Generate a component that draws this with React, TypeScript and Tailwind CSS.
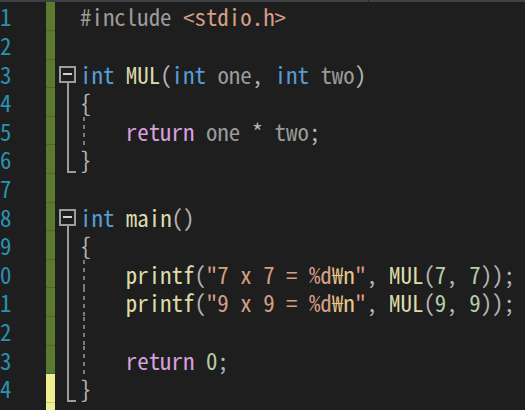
import React from "react";

type Seg = [string, string];

const C = {
  pre: "text-[#9b9b9b]",
  inc: "text-[#d69d85]",
  kw: "text-[#569cd6]",
  fn: "text-[#dcdcaa]",
  par: "text-[#9a9a9a]",
  pun: "text-[#b4b4b4]",
  ret: "text-[#d8a0df]",
  str: "text-[#d69d85]",
  esc: "text-[#e9c88c]",
  num: "text-[#b5cea8]",
};

const lines: Seg[][] = [
  [["#include ", C.pre], ["<stdio.h>", C.inc]],
  [],
  [["int", C.kw], [" ", C.pun], ["MUL", C.fn], ["(", C.pun], ["int", C.kw], [" ", C.pun], ["one", C.par], [", ", C.pun], ["int", C.kw], [" ", C.pun], ["two", C.par], [")", C.pun]],
  [["{", C.pun]],
  [["    ", C.pun], ["return", C.ret], [" ", C.pun], ["one", C.par], [" * ", C.pun], ["two", C.par], [";", C.pun]],
  [["}", C.pun]],
  [],
  [["int", C.kw], [" ", C.pun], ["main", C.fn], ["()", C.pun]],
  [["{", C.pun]],
  [["    ", C.pun], ["printf", C.fn], ["(", C.pun], ["\"7 x 7 = %d", C.str], ["₩n", C.esc], ["\"", C.str], [", ", C.pun], ["MUL", C.fn], ["(", C.pun], ["7", C.num], [", ", C.pun], ["7", C.num], ["));", C.pun]],
  [["    ", C.pun], ["printf", C.fn], ["(", C.pun], ["\"9 x 9 = %d", C.str], ["₩n", C.esc], ["\"", C.str], [", ", C.pun], ["MUL", C.fn], ["(", C.pun], ["9", C.num], [", ", C.pun], ["9", C.num], ["));", C.pun]],
  [],
  [["    ", C.pun], ["return", C.ret], [" ", C.pun], ["0", C.num], [";", C.pun]],
  [["}", C.pun]],
];

const fold = ["none", "none", "box", "bar", "bar", "end", "none", "box", "bar", "bar", "bar", "bar", "bar", "end"];
const guide = [false, false, false, false, true, false, false, false, false, true, true, true, true, false];

function FoldCell({ kind }: { kind: string }) {
  return (
    <div className="relative w-[21px] h-full shrink-0">
      {kind === "box" && (
        <>
          <div className="absolute left-[0px] top-[6px] w-[17px] h-[17px] border-2 border-[#9d9d9d] bg-[#1e1e1e] flex items-center justify-center">
            <div className="w-[9px] h-[2px] bg-[#d0d0d0]" />
          </div>
          <div className="absolute left-[8px] top-[23px] bottom-0 w-[2px] bg-[#9d9d9d]" />
        </>
      )}
      {kind === "bar" && <div className="absolute left-[8px] top-0 bottom-0 w-[2px] bg-[#9d9d9d]" />}
      {kind === "end" && (
        <>
          <div className="absolute left-[8px] top-0 bottom-[2px] w-[2px] bg-[#9d9d9d]" />
          <div className="absolute left-[8px] bottom-[1px] w-[9px] h-[2px] bg-[#9d9d9d]" />
        </>
      )}
    </div>
  );
}

function Row({ num, yellow, children }: { num?: number; yellow: boolean; children?: React.ReactNode }) {
  return (
    <div className="flex h-[28.6px] shrink-0 items-stretch">
      <div className="w-[11.5px] shrink-0 overflow-hidden flex justify-end text-[#2b91af] whitespace-nowrap">
        {num !== undefined && <span>{num}</span>}
      </div>
      <div className="w-[34.5px] shrink-0" />
      <div
        className={`w-[9px] shrink-0 border-b ${
          yellow ? "bg-[#efef8f] border-[#c9c976]" : "bg-[#5a7a32] border-[#4a6628]"
        }`}
      />
      <div className="w-[4px] shrink-0" />
      {children}
    </div>
  );
}

export default function App() {
  return (
    <div className="w-[525px] h-[410px] overflow-hidden bg-[#1e1e1e] flex flex-col">
      <div className="h-[2.4px] shrink-0 bg-[#3f3f46] flex justify-end">
        <div className="w-[1px] h-full bg-[#2a2a2e] mr-[156px]" />
      </div>
      <div
        className="flex flex-col text-[22.9px] leading-[28.6px]"
        style={{ fontFamily: '"Noto Sans Mono CJK KR", "Liberation Mono", monospace' }}
      >
        {lines.map((segs, i) => (
          <Row key={i} num={i + 1} yellow={i === 13}>
            <FoldCell kind={fold[i]} />
            <div className="relative flex-1 whitespace-pre">
              {guide[i] && (
                <div className="absolute left-[3px] top-0 bottom-0 w-[2px] bg-[repeating-linear-gradient(to_bottom,#7a7a7a_0px,#7a7a7a_4px,transparent_4px,transparent_8px)]" />
              )}
              {segs.map(([t, c], j) => (
                <span key={j} className={c}>
                  {t}
                </span>
              ))}
            </div>
          </Row>
        ))}
        <Row yellow={true} />
      </div>
    </div>
  );
}
